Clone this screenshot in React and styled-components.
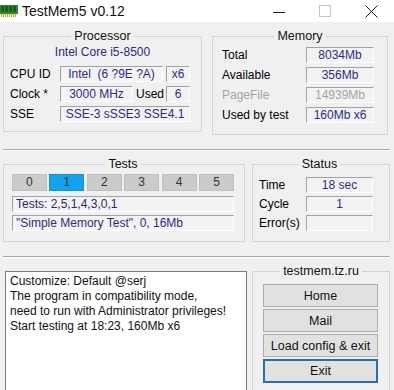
import React from "react";
import styled, { createGlobalStyle } from "styled-components";

const GlobalStyle = createGlobalStyle`
  html, body {
    margin: 0;
    padding: 0;
    background: #f0f0f0;
  }
  body {
    font-family: "Liberation Sans", Arial, sans-serif;
    font-size: 12px;
    color: #000;
    overflow: hidden;
  }
`;

const Window = styled.div`
  width: 394px;
  height: 390px;
  display: flex;
  flex-direction: column;
  overflow: hidden;
`;

const TitleBar = styled.div`
  height: 22px;
  background: #fff;
  display: flex;
  align-items: center;
  flex-shrink: 0;
`;

const TitleText = styled.span`
  font-size: 14px;
  margin-left: 4px;
  color: #111;
`;

const Controls = styled.div`
  margin-left: auto;
  display: flex;
  align-items: center;
  height: 100%;
`;

const ControlBtn = styled.div`
  width: 46px;
  height: 100%;
  display: flex;
  align-items: center;
  justify-content: center;
`;

const Body = styled.div`
  flex: 1;
  padding: 7px 4px 0 3px;
  display: flex;
  flex-direction: column;
`;

const Row = styled.div`
  display: flex;
  gap: ${(p) => p.$gap}px;
  align-items: flex-start;
`;

const Group = styled.fieldset`
  margin: 0;
  padding: ${(p) => p.$pad};
  width: ${(p) => p.$w}px;
  box-sizing: border-box;
  border: 1px solid #d4d4d4;
  min-width: 0;
`;

const Legend = styled.legend`
  margin: 0 auto;
  padding: 0 3px;
  font-size: 12.5px;
  line-height: 15px;
  color: #111;
`;

const Separator = styled.div`
  height: 1px;
  background: #a8a8a8;
  border-bottom: 1px solid #fff;
  margin: ${(p) => p.$m};
`;

const CpuName = styled.div`
  text-align: center;
  color: #2b2b88;
  line-height: 16px;
  margin-bottom: 6px;
`;

const Lines = styled.div`
  display: flex;
  flex-direction: column;
  gap: ${(p) => p.$gap}px;
`;

const Line = styled.div`
  display: flex;
  align-items: center;
  height: 16px;
`;

const Label = styled.span`
  width: ${(p) => p.$w}px;
  flex-shrink: 0;
  box-sizing: border-box;
  padding-left: ${(p) => p.$pl || 0}px;
  white-space: nowrap;
  color: ${(p) => (p.$dim ? "#a4a4a4" : "#000")};
`;

const Field = styled.div`
  width: ${(p) => p.$w}px;
  height: 16px;
  box-sizing: border-box;
  border-top: 1px solid #a2a2a2;
  border-left: 1px solid #a2a2a2;
  border-right: 1px solid #fff;
  border-bottom: 1px solid #fff;
  background: #f3f3f3;
  color: ${(p) => (p.$dim ? "#a4a4a4" : "#2b2b88")};
  text-align: center;
  line-height: 14px;
  white-space: nowrap;
  overflow: hidden;
  margin-left: ${(p) => p.$ml || 0}px;
`;

const TextField = styled(Field)`
  width: auto;
  color: ${(p) => p.$color || "#2b2b88"};
  text-align: left;
  padding-left: 3px;
`;

const Tabs = styled.div`
  display: grid;
  grid-template-columns: repeat(6, 1fr);
  gap: 2.5px;
  margin-bottom: 5px;
`;

const Tab = styled.div`
  height: 17px;
  background: ${(p) => (p.$active ? "#12a2f0" : "#cbcbcb")};
  border: 1px solid ${(p) => (p.$active ? "#0d94e0" : "#c0c0c0")};
  box-sizing: border-box;
  text-align: center;
  line-height: 15px;
  color: #333;
`;

const Log = styled.div`
  width: 242px;
  height: 140px;
  margin: 7px 0 0 2px;
  box-sizing: border-box;
  background: #fff;
  border: 1px solid #7a7a7a;
  padding: 2px 4px;
  line-height: 15px;
  font-size: 12px;
  color: #111;
`;

const Buttons = styled.div`
  display: flex;
  flex-direction: column;
  gap: 2px;
  margin-top: 5px;
`;

const Button = styled.button`
  width: 115px;
  height: ${(p) => (p.$default ? 24 : 23)}px;
  margin: 0;
  padding: 0;
  background: #e1e1e1;
  border: ${(p) => (p.$default ? "2px solid #2a6fb5" : "1px solid #adadad")};
  font-family: inherit;
  font-size: 12.5px;
  color: #111;
`;

const ChipIcon = () => (
  <svg width="18" height="12" viewBox="0 0 18 12">
    <rect x="0" y="0" width="18" height="9" fill="#2e8b2e" />
    <rect x="1" y="1" width="3" height="6" fill="#1d5e1d" />
    <rect x="5" y="1" width="3" height="6" fill="#1d5e1d" />
    <rect x="9" y="1" width="3" height="6" fill="#1d5e1d" />
    <rect x="13" y="1" width="3" height="6" fill="#1d5e1d" />
    {[1, 3, 5, 7, 9, 11, 13, 15].map((x) => (
      <rect key={x} x={x} y="9" width="1.2" height="3" fill="#c8a830" />
    ))}
  </svg>
);

const tests = [0, 1, 2, 3, 4, 5];

export default function App() {
  return (
    <>
      <GlobalStyle />
      <Window>
        <TitleBar>
          <ChipIcon />
          <TitleText>TestMem5 v0.12</TitleText>
          <Controls>
            <ControlBtn>
              <svg width="12" height="10">
                <line x1="0" y1="6.5" x2="12" y2="6.5" stroke="#222" />
              </svg>
            </ControlBtn>
            <ControlBtn>
              <svg width="12" height="12">
                <rect x="0.5" y="0.5" width="11" height="11" fill="none" stroke="#c4c4c4" />
              </svg>
            </ControlBtn>
            <ControlBtn>
              <svg width="13" height="13">
                <path d="M0.5 0.5 L12.5 12.5 M12.5 0.5 L0.5 12.5" stroke="#222" />
              </svg>
            </ControlBtn>
          </Controls>
        </TitleBar>
        <Body>
          <Row $gap={10}>
            <Group $w={199} $pad="0 6px 9px 6px">
              <Legend>Processor</Legend>
              <CpuName>Intel Core i5-8500</CpuName>
              <Lines $gap={4}>
                <Line>
                  <Label $w={50}>CPU ID</Label>
                  <Field $w={103}>Intel&nbsp;&nbsp;(6 ?9E ?A)</Field>
                  <Field $w={24} $ml={3}>x6</Field>
                </Line>
                <Line>
                  <Label $w={50}>Clock *</Label>
                  <Field $w={73}>3000 MHz</Field>
                  <Label $w={33} $pl={3}>Used</Label>
                  <Field $w={24}>6</Field>
                </Line>
                <Line>
                  <Label $w={50}>SSE</Label>
                  <Field $w={130}>SSE-3 sSSE3 SSE4.1</Field>
                </Line>
              </Lines>
            </Group>
            <Group $w={176} $pad="3px 9px 11px 9px">
              <Legend>Memory</Legend>
              <Lines $gap={4}>
                <Line>
                  <Label $w={84}>Total</Label>
                  <Field $w={68}>8034Mb</Field>
                </Line>
                <Line>
                  <Label $w={84}>Available</Label>
                  <Field $w={68}>356Mb</Field>
                </Line>
                <Line>
                  <Label $w={84} $dim>PageFile</Label>
                  <Field $w={68} $dim>14939Mb</Field>
                </Line>
                <Line>
                  <Label $w={84}>Used by test</Label>
                  <Field $w={68}>160Mb x6</Field>
                </Line>
              </Lines>
            </Group>
          </Row>
          <Separator $m="14px 0 6px 0" />
          <Row $gap={7}>
            <Group $w={242} $pad="2px 10px 10px 8px">
              <Legend>Tests</Legend>
              <Tabs>
                {tests.map((t) => (
                  <Tab key={t} $active={t === 1}>{t}</Tab>
                ))}
              </Tabs>
              <Lines $gap={3}>
                <TextField $color="#2a2a66">Tests: 2,5,1,4,3,0,1</TextField>
                <TextField>"Simple Memory Test", 0, 16Mb</TextField>
              </Lines>
            </Group>
            <Group $w={138} $pad="5px 9px 10px 6px">
              <Legend>Status</Legend>
              <Lines $gap={3}>
                <Line>
                  <Label $w={47}>Time</Label>
                  <Field $w={67}>18 sec</Field>
                </Line>
                <Line>
                  <Label $w={47}>Cycle</Label>
                  <Field $w={67}>1</Field>
                </Line>
                <Line>
                  <Label $w={47}>Error(s)</Label>
                  <Field $w={67}></Field>
                </Line>
              </Lines>
            </Group>
          </Row>
          <Separator $m="14px 0 6px 0" />
          <Row $gap={5}>
            <Log>
              Customize: Default @serj
              <br />
              The program in compatibility mode,
              <br />
              need to run with Administrator privileges!
              <br />
              Start testing at 18:23, 160Mb x6
            </Log>
            <Group $w={138} $pad="0 10px 10px 10px">
              <Legend>testmem.tz.ru</Legend>
              <Buttons>
                <Button>Home</Button>
                <Button>Mail</Button>
                <Button>Load config &amp; exit</Button>
                <Button $default>Exit</Button>
              </Buttons>
            </Group>
          </Row>
        </Body>
      </Window>
    </>
  );
}
